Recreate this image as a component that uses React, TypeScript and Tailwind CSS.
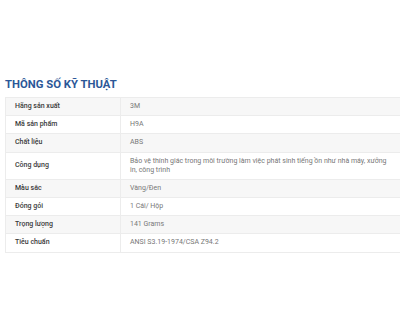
import React from 'react';

interface SpecRow {
  label: string;
  value: string;
}

const specs: SpecRow[] = [
  { label: 'Hãng sản xuất', value: '3M' },
  { label: 'Mã sản phẩm', value: 'H9A' },
  { label: 'Chất liệu', value: 'ABS' },
  {
    label: 'Công dụng',
    value: 'Bảo vệ thính giác trong môi trường làm việc phát sinh tiếng ồn như nhà máy, xưởng in, công trình',
  },
  { label: 'Màu sắc', value: 'Vàng/Đen' },
  { label: 'Đóng gói', value: '1 Cái/ Hộp' },
  { label: 'Trọng lượng', value: '141 Grams' },
  { label: 'Tiêu chuẩn', value: 'ANSI S3.19-1974/CSA Z94.2' },
];

export default function App() {
  return (
    <div className="w-[400px] h-[330px] overflow-hidden bg-white font-['Roboto',sans-serif]">
      <div className="pt-[77px] pl-[5px]">
        <h2 className="text-[11.3px] leading-[16px] font-bold text-[#2b5797]">
          THÔNG SỐ KỸ THUẬT
        </h2>
        <table className="mt-[4px] w-[405px] border-collapse text-[7px] leading-[9px]">
          <tbody>
            {specs.map((row, i) => (
              <tr key={row.label} className={i % 2 === 0 ? 'bg-[#f7f7f7]' : 'bg-white'}>
                <td className="w-[115px] border border-[#ececec] pl-[9px] pr-2 py-[4.1px] align-middle font-medium text-[#3a3a3a]">
                  {row.label}
                </td>
                <td className="border border-[#ececec] pl-[9px] pr-[14px] py-[4.1px] align-middle text-[#777]">
                  {row.value}
                </td>
              </tr>
            ))}
          </tbody>
        </table>
      </div>
    </div>
  );
}
